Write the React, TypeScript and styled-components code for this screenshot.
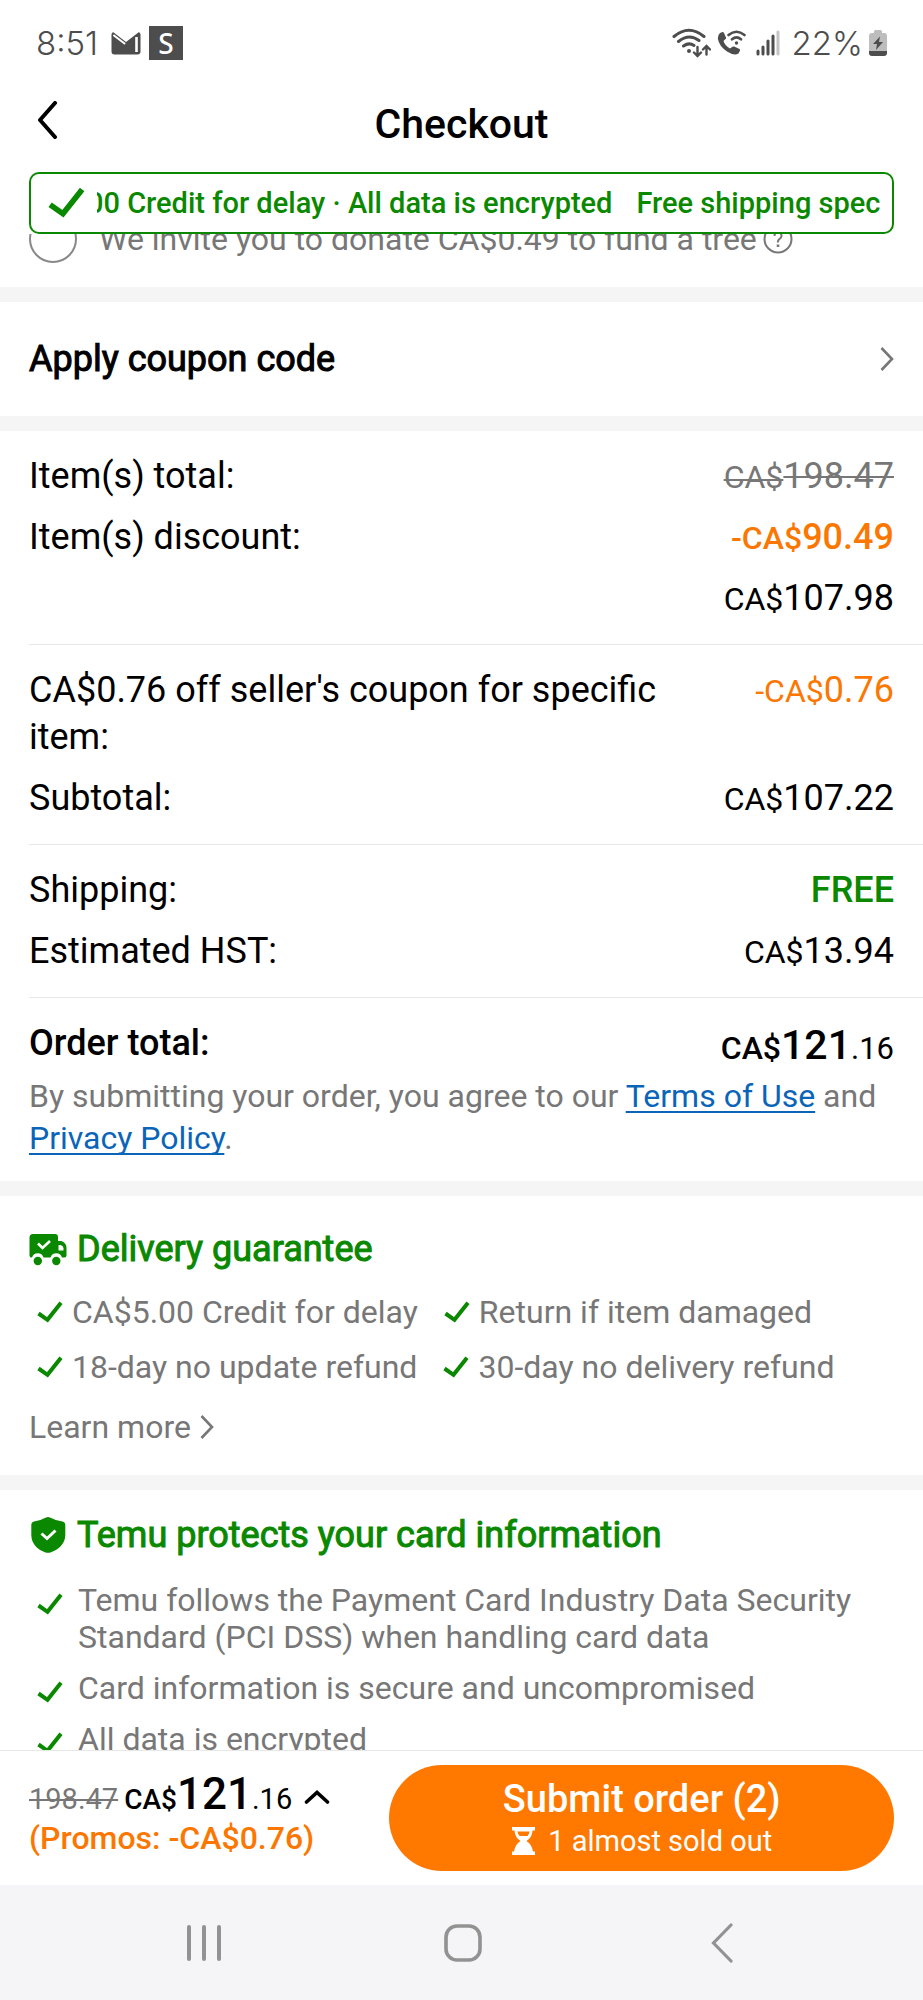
import React from "react";
import styled, { createGlobalStyle, css } from "styled-components";

const color = {
  green: "#0a8800",
  orange: "#fb7701",
  grey: "#777777",
  band: "#f5f5f5",
  line: "#e8e8e8",
  link: "#0a65b8",
  status: "#4d4d4d",
};

const GlobalStyle = createGlobalStyle`
  * { box-sizing: border-box; }
  body {
    margin: 0;
    background: #fff;
    color: #000;
    font-family: Roboto, "Liberation Sans", sans-serif;
  }
  button, input { font: inherit; color: inherit; }
  button { border: 0; padding: 0; background: none; cursor: pointer; }
  h1, h2, p, ul, dl, dt, dd { margin: 0; padding: 0; font-weight: 400; }
  svg { display: block; flex: none; }
`;

const fakeBold = css`
  -webkit-text-stroke: 1px currentColor;
`;

const Screen = styled.div`
  display: flex;
  flex-direction: column;
  height: 100vh;
`;

/* Status bar */

const StatusBar = styled.div`
  display: flex;
  justify-content: space-between;
  align-items: center;
  height: 86px;
  padding: 0 36px;
  color: ${color.status};
  font: 300 33px/40px Inter, sans-serif;
`;

const StatusGroup = styled.div<{ $gap: number }>`
  display: flex;
  align-items: center;
  gap: ${(p) => p.$gap}px;
`;

const Clock = styled.time`
  margin-right: 5px;
`;

const AppBadge = styled.span`
  width: 34px;
  height: 34px;
  background: ${color.status};
  color: #fff;
  font: 500 28px/34px "Noto Sans", sans-serif;
  text-align: center;
`;

/* Header */

const Header = styled.header`
  display: grid;
  grid-template-columns: 1fr auto 1fr;
  align-items: center;
  height: 86px;
  padding: 0 36px 10px;
`;

const BackButton = styled.button`
  justify-self: start;
  padding-bottom: 8px;
`;

const Title = styled.h1`
  font-size: 41px;
  line-height: 48px;
  font-weight: 500;
`;

const Banner = styled.div`
  display: flex;
  align-items: center;
  gap: 12px;
  height: 62px;
  flex: none;
  margin: 0 29px;
  padding: 0 12px 0 17px;
  border: 2px solid ${color.green};
  border-radius: 10px;
  color: ${color.green};
  font-size: 29px;
  line-height: 40px;
  font-weight: 500;
`;

const Marquee = styled.div`
  display: flex;
  flex: 1;
  gap: 24px;
  overflow: hidden;
  white-space: nowrap;

  span:first-child { margin-left: -10px; }
`;

/* Scrolled content */

const Content = styled.main`
  flex: 1;
  min-height: 0;
  overflow: auto;
  scrollbar-width: none;
`;

const Donation = styled.section`
  display: flex;
  align-items: flex-end;
  height: 53px;
  padding: 0 29px 24px;
  overflow: hidden;
  color: ${color.grey};
`;

const DonationLabel = styled.label`
  display: flex;
  align-items: center;
  gap: 22px;
  font-size: 32px;
  line-height: 48px;
`;

const Radio = styled.input`
  appearance: none;
  width: 48px;
  height: 48px;
  margin: 0;
  border: 2px solid #888;
  border-radius: 50%;
`;

const HelpButton = styled.button`
  margin: 0 0 9px 6px;
`;

const Band = styled.div`
  height: 15px;
  background: ${color.band};
`;

const CouponButton = styled.button`
  display: flex;
  justify-content: space-between;
  align-items: center;
  width: 100%;
  height: 114px;
  padding: 0 29px;
  font-size: 36px;
  line-height: 47px;
  ${fakeBold}
`;

const Summary = styled.section`
  padding-left: 29px;
`;

const Group = styled.dl<{ $last?: boolean }>`
  display: flex;
  flex-direction: column;
  gap: 14px;
  padding: 22px 29px 22px 0;
  border-bottom: 1px solid ${color.line};
  ${(p) => p.$last && "border-bottom: 0; padding-bottom: 0;"}
`;

const Row = styled.div`
  display: flex;
  justify-content: space-between;
  font-size: 36px;
  line-height: 47px;
`;

const Term = styled.dt<{ $strong?: boolean }>`
  max-width: 640px;
  font-weight: ${(p) => (p.$strong ? 500 : 400)};
`;

type Tone = "plain" | "struck" | "promo" | "free";

const toneColor: Record<Tone, string> = {
  plain: "#000",
  struck: color.grey,
  promo: color.orange,
  free: color.green,
};

const Value = styled.dd<{ $tone: Tone; $strong?: boolean }>`
  margin-left: auto;
  white-space: nowrap;
  color: ${(p) => toneColor[p.$tone]};
  font-weight: ${(p) => (p.$strong ? 500 : 400)};
  text-decoration: ${(p) => (p.$tone === "struck" ? "line-through" : "none")};
  text-decoration-thickness: 2px;
`;

const GrandTotal = styled(Value)`
  line-height: 55px;
`;

const Part = styled.span<{ $size: number; $light?: boolean }>`
  font-size: ${(p) => p.$size}px;
  line-height: 1;
  ${(p) => p.$light && "font-weight: 400;"}
`;

const Terms = styled.p`
  padding: 0 29px 22px 0;
  color: ${color.grey};
  font-size: 32px;
  line-height: 42px;
`;

const Link = styled.a`
  color: ${color.link};
  text-decoration-thickness: 2px;
  text-underline-offset: 4px;
  text-decoration-skip-ink: none;
`;

const Panel = styled.section<{ $top: number }>`
  padding: ${(p) => p.$top}px 29px 27px;
  color: ${color.grey};
  font-size: 32px;
`;

const PanelTitle = styled.h2`
  display: flex;
  align-items: center;
  gap: 10px;
  color: ${color.green};
  font-size: 36px;
  line-height: 42px;
  ${fakeBold}
`;

const Perks = styled.ul`
  display: flex;
  flex-direction: column;
  gap: 13px;
  list-style: none;
  padding: 21px 0 18px 8px;
  line-height: 42px;
`;

const PerkPair = styled.ul`
  display: flex;
  gap: 26px;
  list-style: none;
`;

const Perk = styled.li`
  display: flex;
  align-items: center;
  gap: 9px;
  white-space: nowrap;
`;

const LearnMore = styled.a`
  display: inline-flex;
  align-items: center;
  gap: 9px;
  color: inherit;
  text-decoration: none;
  line-height: 42px;
`;

const Facts = styled.ul`
  display: flex;
  flex-direction: column;
  gap: 14px;
  list-style: none;
  padding: 26px 0 0 8px;
  line-height: 37px;
`;

const Fact = styled.li`
  display: flex;
  align-items: flex-start;
  gap: 15px;

  svg { margin-top: 11px; }
`;

/* Bottom bars */

const OrderBar = styled.footer`
  display: grid;
  grid-template-columns: 5fr 7fr;
  height: 135px;
  flex: none;
  padding: 14px 29px;
  border-top: 1px solid ${color.line};
`;

const TotalButton = styled.button`
  display: flex;
  flex-direction: column;
  align-items: flex-start;
  justify-content: flex-start;
  padding-top: 7px;
  white-space: nowrap;
`;

const TotalLine = styled.span`
  display: flex;
  align-items: baseline;
  font-size: 28px;
  line-height: 45px;
  font-weight: 500;

  s {
    margin-right: 6px;
    color: ${color.grey};
    font-size: 29px;
    font-weight: 400;
    text-decoration-thickness: 2px;
  }
  svg { margin-left: 12px; align-self: center; }
`;

const Promos = styled.span`
  color: ${color.orange};
  font-size: 32px;
  line-height: 32px;
  font-weight: 500;
`;

const SubmitButton = styled.button`
  display: flex;
  flex-direction: column;
  align-items: center;
  height: 106px;
  padding-top: 11px;
  border-radius: 53px;
  background: #ff7800;
  color: #fff;
  font-size: 38px;
  line-height: 46px;
  font-weight: 500;
`;

const SubmitNote = styled.span`
  display: flex;
  align-items: center;
  gap: 12px;
  font-size: 29px;
  line-height: 38px;
  font-weight: 400;
`;

const SystemNav = styled.nav`
  display: grid;
  grid-template-columns: 1fr 1fr 1fr;
  height: 115px;
  flex: none;
  padding: 0 72px 0 75px;
  background: #f5f5f7;

  button { display: flex; justify-content: center; align-items: center; }
`;

/* Icons */

const Check = ({ width = 26 }: { width?: number }) => (
  <svg width={width} height={(width * 22) / 26} viewBox="0 0 26 22" fill="none" aria-hidden="true">
    <path d="M1.5 12.5 10.5 18.8 24 1.8" stroke={color.green} strokeWidth="4" />
  </svg>
);

const Chevron = ({ stroke = "#777" }: { stroke?: string }) => (
  <svg width="14" height="26" viewBox="0 0 14 26" fill="none" aria-hidden="true">
    <path d="M1.5 2 12 13 1.5 24" stroke={stroke} strokeWidth="2.6" />
  </svg>
);

const Mail = () => (
  <svg width="30" height="24" viewBox="0 0 30 24" aria-hidden="true">
    <path d="M2 1 15 11 28 1 29.5 3V20.5a3 3 0 0 1-3 3H3.500a3 3 0 0 1-3-3V3Z" fill={color.status} />
    <path d="M3 4.500 13.500 12.500" stroke="#fff" strokeWidth="2" strokeLinecap="round" />
    <path d="M25.500 6V21" stroke="#fff" strokeWidth="2.600" />
  </svg>
);

const Wifi = () => (
  <svg width="39" height="30" viewBox="0 0 39 30" fill="none" stroke={color.status} strokeWidth="3" strokeLinecap="round" aria-hidden="true">
    <path d="M2 8.500Q17 -4 32 8.500M6.500 13.500Q17 5 27 12.500M11.500 18Q17 14 22 17.500" />
    <circle cx="17" cy="23" r="2" fill={color.status} stroke="none" />
    <path d="M25.500 19V27.500M22 24.500 25.500 28 29 24.500M34.500 26.500V18.500M31 21.500 34.500 18 38 21.500" strokeWidth="2.400" />
  </svg>
);

const WifiCall = () => (
  <svg width="29" height="26" viewBox="0 0 29 26" aria-hidden="true">
    <path d="M3 3 5.500 2Q6.500 1.800 7 3L9 7.500Q9.300 8.500 8.500 9L6.500 11Q8 16 13 18.500L15.500 16.800Q16.300 16.200 17.200 16.600L22.500 19Q23.500 19.600 23 20.600L21.500 23.500Q17 26 10 21.500Q2 16 .8 8.500Q.6 5 3 3Z" fill={color.status} />
    <path d="M11.500 5Q19.500 -1.500 27.500 5M15 9.300Q19.500 5.500 24 9.300" fill="none" stroke={color.status} strokeWidth="2.600" strokeLinecap="round" />
    <circle cx="19.500" cy="13" r="1.700" fill={color.status} />
  </svg>
);

const SignalIcon = styled.svg`
  margin: 0 6px 0 4px;
`;

const Signal = () => (
  <SignalIcon width="24" height="26" viewBox="0 0 24 26" strokeWidth="3" strokeLinecap="round" stroke={color.status} aria-hidden="true">
    <path d="M2 21V24M7 17V24M12 11V24M17 6V24" />
    <path d="M22 2V24" stroke="#c4c4c4" />
  </SignalIcon>
);

const Battery = () => (
  <svg width="18" height="26" viewBox="0 0 18 26" aria-hidden="true">
    <path d="M5 3V1.500A1.500 1.500 0 0 1 6.500 0h5A1.500 1.500 0 0 1 13 1.500V3h2a3 3 0 0 1 3 3v15H0V6a3 3 0 0 1 3-3Z" fill="#bdbdbd" />
    <path d="M0 21H18V23a3 3 0 0 1-3 3H3a3 3 0 0 1-3-3Z" fill={color.status} />
    <path d="M11 6.500 4 14h4L7 20l7-8h-4Z" fill={color.status} />
  </svg>
);

const Back = () => (
  <svg width="22" height="38" viewBox="0 0 22 38" fill="none" aria-hidden="true">
    <path d="M19 2 4 19 19 36" stroke="#000" strokeWidth="4" strokeLinecap="round" strokeLinejoin="round" />
  </svg>
);

const Help = () => (
  <svg width="30" height="30" viewBox="0 0 30 30" fill="none" stroke="#777" strokeWidth="2" aria-hidden="true">
    <circle cx="15" cy="15" r="13.500" />
    <path d="M11.500 12Q11.500 8.500 15 8.500T18.500 12Q18.500 13.500 16.500 15T15 18.500" />
    <path d="M15 20.500V23" strokeWidth="2.600" />
  </svg>
);

const Truck = () => (
  <svg width="38" height="33" viewBox="0 0 38 33" aria-hidden="true">
    <path d="M4 1H26a3 3 0 0 1 3 3V8h3.500Q37.500 10 37.500 15V22.500a2 2 0 0 1-2 2H33A6 6 0 0 0 21.500 24.500H14.500A6 6 0 0 0 3 24.500H2.500a2 2 0 0 1-2-2V4.500A3.500 3.500 0 0 1 4 1Z" fill={color.green} />
    <path d="M29.500 12v5.500h5V15q-.5-2.500-3-3Z" fill="#fff" />
    <path d="M9 10.500 13.500 15 21 8" fill="none" stroke="#fff" strokeWidth="2.600" />
    <circle cx="8.800" cy="28" r="4.200" fill={color.green} />
    <circle cx="27.300" cy="28" r="4.200" fill={color.green} />
  </svg>
);

const Shield = () => (
  <svg width="38" height="38" viewBox="0 0 38 38" aria-hidden="true">
    <path d="M19 1Q20 1 21 1.600 27 5 33.500 5.500 36.300 6 36.300 9V19C36.300 28 29 34 21.500 36.400Q19 37 16.500 36.400C9 34 2.300 28 2.300 19V9Q2.300 6 5 5.500 11 5 17 1.600 18 1 19 1Z" fill={color.green} />
    <path d="M12.500 17.500 18 22.500 26.500 14.500" fill="none" stroke="#fff" strokeWidth="3" />
  </svg>
);

const CaretUp = () => (
  <svg width="26" height="14" viewBox="0 0 26 14" fill="none" aria-hidden="true">
    <path d="M2.500 12 13 2.500 23.500 12" stroke="#000" strokeWidth="3.600" strokeLinecap="round" />
  </svg>
);

const Hourglass = () => (
  <svg width="25" height="28" viewBox="0 0 25 28" aria-hidden="true">
    <path d="M1 0H24V3.500H21.500Q21 10.500 15.500 14 21 17.500 22 24.500H24V28H1V24.500H3Q4 17.500 9.500 14 4 10.500 3.500 3.500H1Z" fill="#fff" />
    <path d="M6.500 4.500H18.500Q18 7.500 16.500 9H8.500Q7 7.500 6.500 4.500Z" fill="#ff7800" />
  </svg>
);

const Recents = () => (
  <svg width="36" height="38" viewBox="0 0 36 38" stroke="#929292" strokeWidth="4" strokeLinecap="round" aria-hidden="true">
    <path d="M3 3V35M18 3V35M33 3V35" />
  </svg>
);

const Home = () => (
  <svg width="38" height="38" viewBox="0 0 38 38" fill="none" aria-hidden="true">
    <rect x="2" y="2" width="34" height="34" rx="11" stroke="#929292" strokeWidth="3.600" />
  </svg>
);

const NavBack = () => (
  <svg width="22" height="40" viewBox="0 0 22 40" fill="none" aria-hidden="true">
    <path d="M20 2 2.500 20 20 38" stroke="#929292" strokeWidth="3.200" strokeLinecap="round" />
  </svg>
);

/* Data */

interface Line {
  label?: string;
  sign?: string;
  amount: string;
  tone?: Tone;
  strong?: boolean;
}

const groups: Line[][] = [
  [
    { label: "Item(s) total:", sign: "CA$", amount: "198.47", tone: "struck" },
    { label: "Item(s) discount:", sign: "-CA$", amount: "90.49", tone: "promo", strong: true },
    { sign: "CA$", amount: "107.98" },
  ],
  [
    { label: "CA$0.76 off seller's coupon for specific item:", sign: "-CA$", amount: "0.76", tone: "promo" },
    { label: "Subtotal:", sign: "CA$", amount: "107.22" },
  ],
  [
    { label: "Shipping:", amount: "FREE", tone: "free", strong: true },
    { label: "Estimated HST:", sign: "CA$", amount: "13.94" },
  ],
];

const perks = [
  ["CA$5.00 Credit for delay", "Return if item damaged"],
  ["18-day no update refund", "30-day no delivery refund"],
];

const facts = [
  "Temu follows the Payment Card Industry Data Security Standard (PCI DSS) when handling card data",
  "Card information is secure and uncompromised",
  "All data is encrypted",
];

export default function App() {
  return (
    <Screen>
      <GlobalStyle />
      <StatusBar>
        <StatusGroup $gap={8}>
          <Clock>8:51</Clock>
          <Mail />
          <AppBadge>S</AppBadge>
        </StatusGroup>
        <StatusGroup $gap={6}>
          <Wifi />
          <WifiCall />
          <Signal />
          <span>22%</span>
          <Battery />
        </StatusGroup>
      </StatusBar>

      <Header>
        <BackButton aria-label="Back"><Back /></BackButton>
        <Title>Checkout</Title>
      </Header>

      <Banner>
        <Check width={37} />
        <Marquee>
          <span>00 Credit for delay · All data is encrypted</span>
          <span>Free shipping spec</span>
        </Marquee>
      </Banner>

      <Content>
        <Donation>
          <DonationLabel>
            <Radio type="radio" name="donation" />
            We invite you to donate CA$0.49 to fund a tree
          </DonationLabel>
          <HelpButton aria-label="About the donation"><Help /></HelpButton>
        </Donation>
        <Band />
        <CouponButton>
          Apply coupon code
          <Chevron />
        </CouponButton>
        <Band />

        <Summary>
          {groups.map((lines, i) => (
            <Group key={i}>
              {lines.map((line) => (
                <Row key={line.amount}>
                  {line.label && <Term>{line.label}</Term>}
                  <Value $tone={line.tone ?? "plain"} $strong={line.strong}>
                    {line.sign && <Part $size={32}>{line.sign}</Part>}
                    {line.amount}
                  </Value>
                </Row>
              ))}
            </Group>
          ))}
          <Group $last>
            <Row>
              <Term $strong>Order total:</Term>
              <GrandTotal $tone="plain" $strong>
                <Part $size={32}>CA$</Part>
                <Part $size={41}>121</Part>
                <Part $size={31} $light>.16</Part>
              </GrandTotal>
            </Row>
          </Group>
          <Terms>
            By submitting your order, you agree to our <Link href="#terms">Terms of Use</Link> and{" "}
            <Link href="#privacy">Privacy Policy</Link>.
          </Terms>
        </Summary>
        <Band />

        <Panel $top={32}>
          <PanelTitle><Truck />Delivery guarantee</PanelTitle>
          <Perks>
            {perks.map((pair) => (
              <li key={pair[0]}>
                <PerkPair>
                  {pair.map((perk) => (
                    <Perk key={perk}><Check />{perk}</Perk>
                  ))}
                </PerkPair>
              </li>
            ))}
          </Perks>
          <LearnMore href="#guarantee">Learn more<Chevron /></LearnMore>
        </Panel>
        <Band />

        <Panel $top={24}>
          <PanelTitle><Shield />Temu protects your card information</PanelTitle>
          <Facts>
            {facts.map((fact) => (
              <Fact key={fact}><Check />{fact}</Fact>
            ))}
          </Facts>
        </Panel>
      </Content>

      <OrderBar>
        <TotalButton>
          <TotalLine>
            <s>198.47</s>
            CA$<Part $size={44}>121</Part><Part $size={29} $light>.16</Part>
            <CaretUp />
          </TotalLine>
          <Promos>(Promos: -CA$0.76)</Promos>
        </TotalButton>
        <SubmitButton>
          Submit order (2)
          <SubmitNote><Hourglass />1 almost sold out</SubmitNote>
        </SubmitButton>
      </OrderBar>

      <SystemNav aria-label="System">
        <button aria-label="Recent apps"><Recents /></button>
        <button aria-label="Home"><Home /></button>
        <button aria-label="Back"><NavBack /></button>
      </SystemNav>
    </Screen>
  );
}
